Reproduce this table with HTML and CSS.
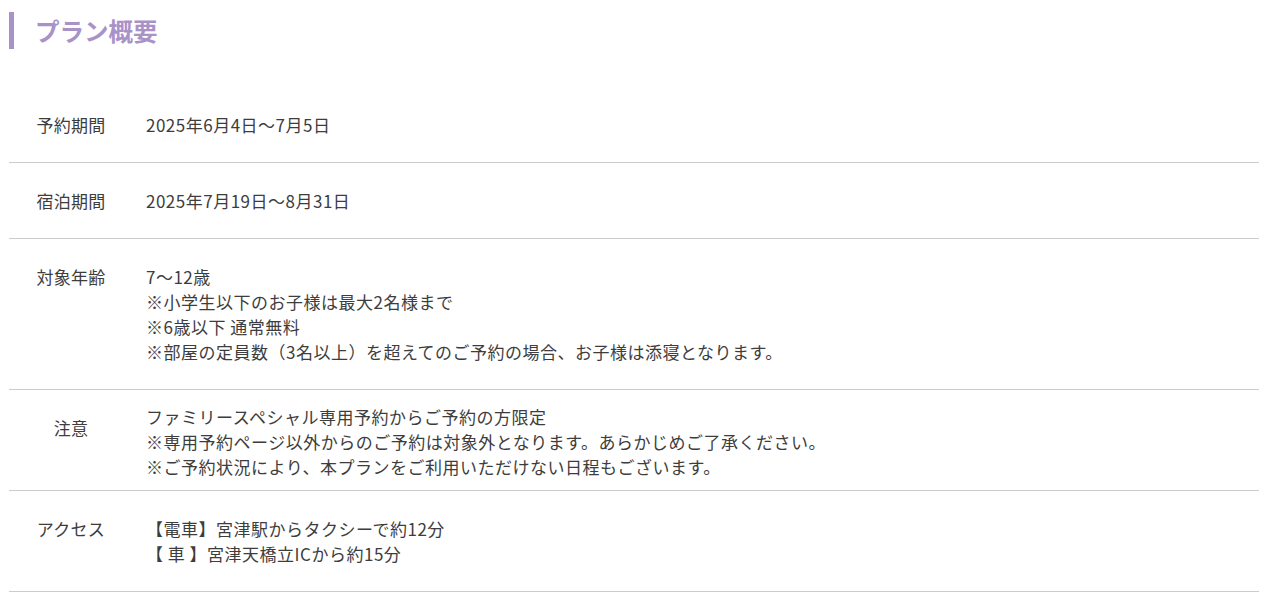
FILE: index.html
```html
<!DOCTYPE html>
<html lang="ja">
<head>
<meta charset="utf-8">
<title>プラン概要</title>
<link rel="stylesheet" href="styles.css">
</head>
<body>
<div class="page">
  <h2 class="heading">プラン概要</h2>
  <div class="table">
    <div class="row">
      <div class="label">予約期間</div>
      <div class="value">2025年6月4日～7月5日</div>
    </div>
    <div class="row">
      <div class="label">宿泊期間</div>
      <div class="value">2025年7月19日～8月31日</div>
    </div>
    <div class="row">
      <div class="label">対象年齢</div>
      <div class="value">7～12歳<br>※小学生以下のお子様は最大2名様まで<br>※6歳以下 通常無料<br>※部屋の定員数（3名以上）を超えてのご予約の場合、お子様は添寝となります。</div>
    </div>
    <div class="row row-note">
      <div class="label">注意</div>
      <div class="value">ファミリースペシャル専用予約からご予約の方限定<br>※専用予約ページ以外からのご予約は対象外となります。あらかじめご了承ください。<br>※ご予約状況により、本プランをご利用いただけない日程もございます。</div>
    </div>
    <div class="row">
      <div class="label">アクセス</div>
      <div class="value">【電車】宮津駅からタクシーで約12分<br>【 車 】宮津天橋立ICから約15分</div>
    </div>
  </div>
</div>
</body>
</html>
```
FILE: styles.css
```css
html, body {
  margin: 0;
  padding: 0;
  background: #ffffff;
}
body {
  font-family: "Noto Sans CJK JP", "Noto Sans", sans-serif;
  color: #3d3d3d;
}
.page {
  padding: 12px 28px 0 9px;
}
.heading {
  margin: 0;
  border-left: 5px solid #a892c8;
  padding-left: 21px;
  font-size: 24.5px;
  line-height: 37px;
  font-weight: 700;
  color: #a892c8;
}
.table {
  margin-top: 38px;
}
.row {
  display: grid;
  grid-template-columns: 124px 1fr;
  border-bottom: 1px solid #cccccc;
  font-size: 17px;
  line-height: 25px;
}
.label {
  text-align: center;
  padding: 25px 0;
  letter-spacing: 0.3px;
}
.value {
  padding: 25px 0 25px 13px;
  letter-spacing: 0.5px;
}
.row-note .value {
  padding-top: 14px;
  padding-bottom: 11px;
}
```
